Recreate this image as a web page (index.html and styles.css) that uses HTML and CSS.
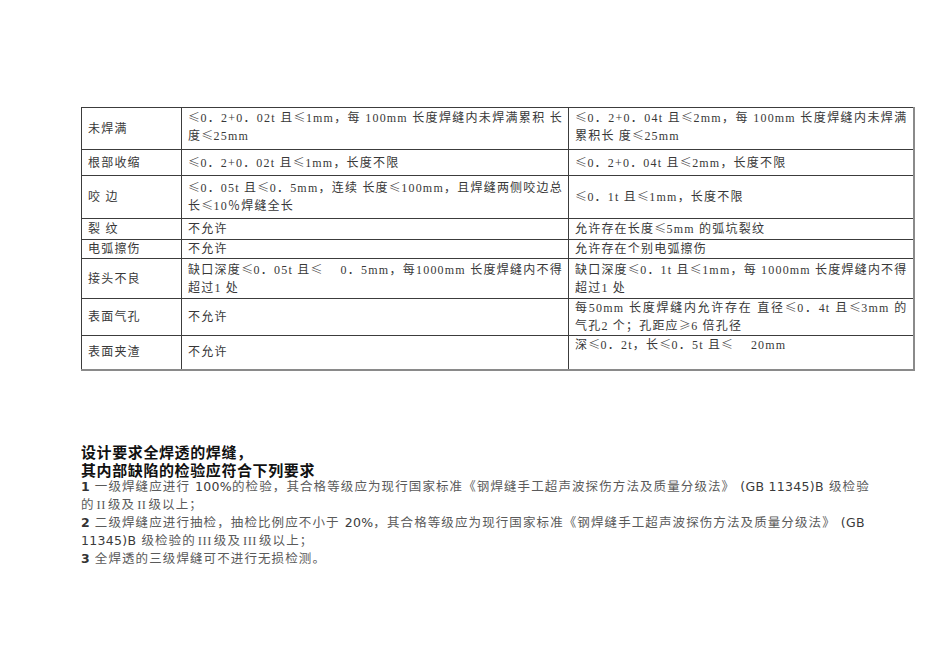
FILE: index.html
```html
<!DOCTYPE html>
<html lang="zh-CN">
<head>
<meta charset="utf-8">
<title>焊缝质量要求</title>
<link rel="stylesheet" href="styles.css">
</head>
<body>
<div class="page">
  <table class="spec">
    <colgroup><col class="c1"><col class="c2"><col class="c3"></colgroup>
    <tr class="r1">
      <th>未焊满</th>
      <td><span class="jl"><span class="m">≤</span>0．2+0．02t 且<span class="m">≤</span>1mm，每 100mm 长度焊缝内未焊满累积 长</span>度<span class="m">≤</span>25mm</td>
      <td><span class="jl"><span class="m">≤</span>0．2+0．04t 且<span class="m">≤</span>2mm，每 100mm 长度焊缝内未焊满</span>累积长 度<span class="m">≤</span>25mm</td>
    </tr>
    <tr class="r2">
      <th>根部收缩</th>
      <td><span class="m">≤</span>0．2+0．02t 且<span class="m">≤</span>1mm，长度不限</td>
      <td><span class="m">≤</span>0．2+0．04t 且<span class="m">≤</span>2mm，长度不限</td>
    </tr>
    <tr class="r3">
      <th>咬 边</th>
      <td><span class="jl"><span class="m">≤</span>0．05t 且<span class="m">≤</span>0．5mm，连续 长度<span class="m">≤</span>100mm，且焊缝两侧咬边总</span>长<span class="m">≤</span>10％焊缝全长</td>
      <td><span class="m">≤</span>0．1t 且<span class="m">≤</span>1mm，长度不限</td>
    </tr>
    <tr class="r4">
      <th>裂 纹</th>
      <td>不允许</td>
      <td>允许存在长度<span class="m">≤</span>5mm 的弧坑裂纹</td>
    </tr>
    <tr class="r5">
      <th>电弧擦伤</th>
      <td>不允许</td>
      <td>允许存在个别电弧擦伤</td>
    </tr>
    <tr class="r6">
      <th>接头不良</th>
      <td><span class="jl">缺口深度<span class="m">≤</span>0．05t 且<span class="m">≤</span> 　0．5mm，每1000mm 长度焊缝内不得</span>超过1 处</td>
      <td><span class="jl">缺口深度<span class="m">≤</span>0．1t 且<span class="m">≤</span>1mm，每 1000mm 长度焊缝内不得</span>超过1 处</td>
    </tr>
    <tr class="r7">
      <th>表面气孔</th>
      <td>不允许</td>
      <td class="top"><span class="jl">每50mm 长度焊缝内允许存在 直径<span class="m">≤</span>0．4t 且<span class="m">≤</span>3mm 的</span>气孔2 个；孔距应<span class="m">≥</span>6 倍孔径</td>
    </tr>
    <tr class="r8">
      <th>表面夹渣</th>
      <td>不允许</td>
      <td class="top">深<span class="m">≤</span>0．2t，长<span class="m">≤</span>0．5t 且<span class="m">≤</span> 　20mm</td>
    </tr>
  </table>

  <section class="notes">
    <h2>设计要求全焊透的焊缝，<br>其内部缺陷的检验应符合下列要求</h2>
    <p><b>1</b> 一级焊缝应进行 <span class="lat">100%</span>的检验，其合格等级应为现行国家标准《钢焊缝手工超声波探伤方法及质量分级法》 <span class="lat">(GB 11345)B</span> 级检验<br>的<span class="rn">II</span>级及<span class="rn">II</span>级以上；</p>
    <p><b>2</b> 二级焊缝应进行抽检，抽检比例应不小于 <span class="lat">20%</span>，其合格等级应为现行国家标准《钢焊缝手工超声波探伤方法及质量分级法》 <span class="lat">(GB</span><br><span class="lat">11345)B</span> 级检验的<span class="rn">III</span>级及<span class="rn">III</span>级以上；</p>
    <p><b>3</b> 全焊透的三级焊缝可不进行无损检测。</p>
  </section>
</div>
</body>
</html>
```

FILE: styles.css
```css
html, body {
  margin: 0;
  padding: 0;
  background: #ffffff;
}

.page {
  padding: 107px 0 0 81px;
}

.spec {
  border-collapse: collapse;
  width: 832px;
  table-layout: fixed;
  font-family: "Liberation Serif", "Noto Sans CJK SC", serif;
  font-size: 12px;
  letter-spacing: 1.2px;
  color: #383838;
  line-height: 18px;
  border-right: 2px solid #8a8a8a;
  border-bottom: 2px solid #8a8a8a;
}

.spec .c1 { width: 100px; }
.spec .c2 { width: 387px; }
.spec .c3 { width: 345px; }

.spec th,
.spec td {
  border: 1px solid #3c3c3c;
  padding: 0 5px 0 6px;
  text-align: left;
  font-weight: normal;
  vertical-align: middle;
}

.spec .top { vertical-align: top; }

.spec .jl {
  display: block;
  white-space: nowrap;
  text-align: justify;
  text-align-last: justify;
}

.spec .m {
  font-family: "Noto Sans CJK SC", sans-serif;
  font-weight: 300;
  letter-spacing: 0.4px;
  line-height: 1;
}

.spec .r1 { height: 42px; }
.spec .r2 { height: 26px; }
.spec .r3 { height: 43px; }
.spec .r4 { height: 21px; }
.spec .r5 { height: 19px; }
.spec .r6 { height: 40px; }
.spec .r7 { height: 36px; }
.spec .r8 { height: 34px; }

.spec .r1 td { vertical-align: top; padding-top: 1px; }

.notes {
  margin-top: 73px;
  font-family: "DejaVu Sans", "Noto Sans CJK SC", sans-serif;
}

.notes h2 {
  margin: 0;
  font-size: 15px;
  line-height: 18px;
  font-weight: bold;
  letter-spacing: 0.6px;
  color: #111111;
}

.notes p {
  margin: 0;
  font-size: 12.5px;
  line-height: 18.2px;
  letter-spacing: 1.1px;
  color: #5a5a5a;
}

.notes p:first-of-type {
  margin-top: -2px;
}

.notes b {
  font-weight: bold;
  color: #333333;
  letter-spacing: 0;
}

.notes .lat {
  color: #3a3a3a;
  letter-spacing: 0.3px;
}

.notes .rn {
  font-family: "Liberation Serif", serif;
  letter-spacing: 0.5px;
  padding: 0 2px;
}
```
